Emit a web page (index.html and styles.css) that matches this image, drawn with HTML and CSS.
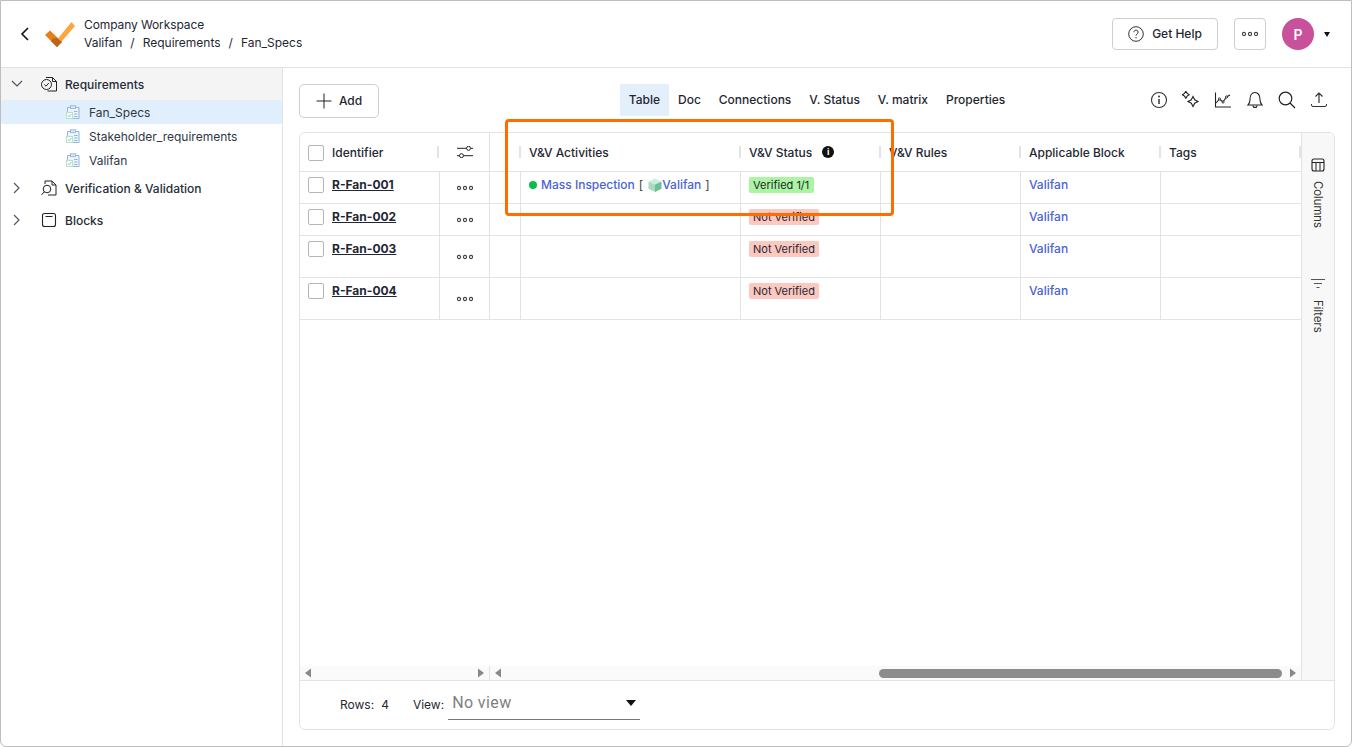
FILE: index.html
```
<!DOCTYPE html>
<html lang="en">
<head>
<meta charset="utf-8">
<title>Fan_Specs</title>
<link rel="stylesheet" href="styles.css">
</head>
<body>
<svg class="defs" width="0" height="0" aria-hidden="true">
  <symbol id="clip" viewBox="0 0 14 14">
    <path d="M1.500 2.500h11.500v11H1.500z" fill="#eef4fb" stroke="#92b6dd" stroke-width="1"/>
    <rect x="4.500" y="0.800" width="5" height="2.600" fill="#dfeaf6" stroke="#92b6dd" stroke-width="0.900"/>
    <path d="M8 6.500h3.500M8 9h3.500M8 11.500h3.500" stroke="#92b6dd" stroke-width="1"/>
    <rect x="0.500" y="7.500" width="6" height="6" fill="#f8fcfa" stroke="#b9e0c9" stroke-width="1"/>
    <path d="M2 10.500l1.200 1.200 2-2.400" fill="none" stroke="#5fc08a" stroke-width="0.800"/>
  </symbol>
  <symbol id="dots" viewBox="0 0 16 6">
    <circle cx="2" cy="3" r="1.600" fill="none" stroke="#444" stroke-width="1.100"/>
    <circle cx="8" cy="3" r="1.600" fill="none" stroke="#444" stroke-width="1.100"/>
    <circle cx="14" cy="3" r="1.600" fill="none" stroke="#444" stroke-width="1.100"/>
  </symbol>
  <symbol id="left" viewBox="0 0 8 10"><path d="M7 0.500v9L1 5z" fill="#888"/></symbol>
  <symbol id="right" viewBox="0 0 8 10"><path d="M1 0.500v9L7 5z" fill="#888"/></symbol>
</svg>
<div class="window">
  <header class="topbar">
    <div class="crumbs-side">
      <svg class="back" width="10" height="14" viewBox="0 0 10 14"><path d="M8 1L2 7l6 6" fill="none" stroke="#111" stroke-width="1.600"/></svg>
      <svg class="logo" width="30" height="25" viewBox="0 0 30 25">
        <path d="M0 13l5-4.400L17 20l-5 5z" fill="#e57f1c"/>
        <path d="M26.500 0L30 4 12 25l-6-6 5 0z" fill="#fba63f"/>
        <path d="M8 16.500l4-.5 5 4-5 5-6-6z" fill="#b9651f"/>
      </svg>
      <div class="crumbs">
        <div class="workspace">Company Workspace</div>
        <div class="trail"><span>Valifan</span><span class="slash">/</span><span>Requirements</span><span class="slash">/</span><span>Fan_Specs</span></div>
      </div>
    </div>
    <div class="actions">
      <button class="btn help">
        <svg width="16" height="16" viewBox="0 0 16 16"><circle cx="8" cy="8" r="7.300" fill="none" stroke="#333" stroke-width="1"/><path d="M5.900 6.200a2.100 2.100 0 1 1 3.300 1.700c-.8.500-1.200 1-1.200 1.800" fill="none" stroke="#333" stroke-width="1"/><circle cx="8" cy="11.800" r=".7" fill="#333"/></svg>
        <span class="btn-label">Get Help</span>
      </button>
      <button class="btn more"><svg width="16" height="6"><use href="#dots"/></svg></button>
      <div class="avatar">P</div>
      <span class="caret"></span>
    </div>
  </header>
  <div class="body">
    <nav class="sidebar">
      <div class="node open">
        <svg class="chev" width="12" height="8" viewBox="0 0 12 8"><path d="M1 1l5 5 5-5" fill="none" stroke="#4a5568" stroke-width="1.200"/></svg>
        <svg class="nicon" width="16" height="16" viewBox="0 0 16 16"><path d="M5 1.500h6.500l4 4v9.500H6.500M11.500 1.500v4h4" fill="none" stroke="#222" stroke-width="1"/><circle cx="5.500" cy="8.500" r="5" fill="#f4f4f4" stroke="#222" stroke-width="1"/><path d="M3.300 8.500l1.700 1.700 2.800-3.200" fill="none" stroke="#222" stroke-width="1"/></svg>
        <span>Requirements</span>
      </div>
      <div class="leaf active"><svg width="14" height="14"><use href="#clip"/></svg><span>Fan_Specs</span></div>
      <div class="leaf"><svg width="14" height="14"><use href="#clip"/></svg><span>Stakeholder_requirements</span></div>
      <div class="leaf"><svg width="14" height="14"><use href="#clip"/></svg><span>Valifan</span></div>
      <div class="node tall">
        <svg class="chev side" width="8" height="12" viewBox="0 0 8 12"><path d="M1 1l5 5-5 5" fill="none" stroke="#4a5568" stroke-width="1.200"/></svg>
        <svg class="nicon" width="16" height="16" viewBox="0 0 16 16"><path d="M4 1h7l4 4v10H7M11 1v4h4M4 1v3" fill="none" stroke="#222" stroke-width="1"/><circle cx="6" cy="9" r="3.800" fill="#fff" stroke="#222" stroke-width="1"/><path d="M3.300 11.700L0.500 15" stroke="#222" stroke-width="1"/></svg>
        <span>Verification &amp; Validation</span>
      </div>
      <div class="node tall">
        <svg class="chev side" width="8" height="12" viewBox="0 0 8 12"><path d="M1 1l5 5-5 5" fill="none" stroke="#4a5568" stroke-width="1.200"/></svg>
        <svg class="nicon" width="16" height="16" viewBox="0 0 16 16"><rect x="1.500" y="1.500" width="13" height="13" rx="2" fill="none" stroke="#222" stroke-width="1.100"/><path d="M4.500 4.500h7" stroke="#222" stroke-width="1.100"/></svg>
        <span>Blocks</span>
      </div>
    </nav>
    <main class="main">
      <div class="toolbar">
        <div class="tool-left">
          <button class="btn add">
            <svg width="16" height="16" viewBox="0 0 16 16"><path d="M8 .5v15M.5 8h15" stroke="#222" stroke-width="1"/></svg>
            <span class="btn-label">Add</span>
          </button>
        </div>
        <div class="tabs">
          <span class="tab current">Table</span><span class="tab">Doc</span><span class="tab">Connections</span><span class="tab">V. Status</span><span class="tab">V. matrix</span><span class="tab">Properties</span>
        </div>
        <div class="tool-icons">
          <svg class="ti" viewBox="0 0 18 18"><circle cx="9" cy="9" r="7.500" fill="none" stroke="#333" stroke-width="1.100"/><path d="M9 8v5" stroke="#333" stroke-width="1.500"/><circle cx="9" cy="5.500" r="1" fill="#333"/></svg>
          <svg class="ti" viewBox="0 0 18 18"><path d="M4.500 1l1.600 2.400L8.500 5 6.100 6.600 4.500 9 2.900 6.600.5 5l2.400-1.600z" transform="translate(0 -.5) scale(.85)" fill="none" stroke="#222" stroke-width="1.300"/><path d="M11 5.500l1.700 3.300L16 10.500l-3.300 1.700L11 15.500l-1.700-3.300L6 10.500l3.300-1.700z" fill="none" stroke="#222" stroke-width="1.100"/></svg>
          <svg class="ti" viewBox="0 0 18 18"><path d="M1.500 1.500v14.500h15.500" fill="none" stroke="#222" stroke-width="1.100"/><path d="M2 12l3.500-4 3.500 3 3.500-5 3.500-2" fill="none" stroke="#222" stroke-width="1.100"/><circle cx="5.500" cy="8" r="1.100" fill="#fff" stroke="#222" stroke-width=".9"/><circle cx="9" cy="11" r="1.100" fill="#fff" stroke="#222" stroke-width=".9"/><circle cx="12.500" cy="6" r="1.100" fill="#fff" stroke="#222" stroke-width=".9"/></svg>
          <svg class="ti" viewBox="0 0 18 18"><path d="M2 14c1.500-1.500 2-2.500 2-5.500C4 4 6 1.500 9 1.500s5 2.500 5 7c0 3 .5 4 2 5.500z" fill="none" stroke="#222" stroke-width="1.100"/><path d="M7 14.500a2 2 0 0 0 4 0" fill="none" stroke="#222" stroke-width="1.100"/></svg>
          <svg class="ti" viewBox="0 0 18 18"><circle cx="7.500" cy="7.500" r="6.300" fill="none" stroke="#222" stroke-width="1.200"/><path d="M12 12l5 5" stroke="#222" stroke-width="1.200"/></svg>
          <svg class="ti" viewBox="0 0 18 18"><path d="M9 12V2M5.500 5.500L9 2l3.500 3.500" fill="none" stroke="#333" stroke-width="1.200"/><path d="M1.500 13v1a1.500 1.500 0 0 0 1.500 1.500h12a1.500 1.500 0 0 0 1.500-1.500v-1" fill="none" stroke="#333" stroke-width="1"/></svg>
        </div>
      </div>
      <section class="panel">
        <div class="panel-top">
          <div class="table-wrap">
            <div class="table">
              <div class="tr head">
                <div class="th c-id"><span class="check"></span><span class="th-label">Identifier</span></div>
                <div class="th c-cfg"><svg width="16" height="12" viewBox="0 0 16 12"><path d="M0 2.300h9.500M13.500 2.300H16M0 9.700h2.500M6.500 9.700H16" stroke="#222" stroke-width="1"/><circle cx="11.500" cy="2.300" r="2" fill="none" stroke="#222" stroke-width="1"/><circle cx="4.500" cy="9.700" r="2" fill="none" stroke="#222" stroke-width="1"/></svg></div>
                <div class="th c-mid"></div>
                <div class="th"><span class="th-label">V&amp;V Activities</span></div>
                <div class="th"><span class="th-label">V&amp;V Status</span><span class="info">i</span></div>
                <div class="th"><span class="th-label">V&amp;V Rules</span></div>
                <div class="th"><span class="th-label">Applicable Block</span></div>
                <div class="th"><span class="th-label">Tags</span></div>
              </div>
              <div class="tr">
                <div class="td c-id"><span class="check"></span><a class="rid">R-Fan-001</a></div>
                <div class="td c-cfg"><svg width="16" height="6"><use href="#dots"/></svg></div>
                <div class="td"></div>
                <div class="td activity"><i class="dot"></i><a class="link">Mass Inspection</a><span class="br">[</span>
                  <svg class="cube" width="16" height="16" viewBox="0 0 16 16"><path d="M8 1.500l6.500 3L8 7.500 1.500 4.500z" fill="#cdeedd"/><path d="M1.500 4.500l6.500 3V15l-6.500-3.200z" fill="#a5dcc0"/><path d="M14.500 4.500l-6.500 3V15l6.500-3.200z" fill="#6fbf95"/></svg><a class="link">Valifan</a><span class="br end">]</span></div>
                <div class="td"><span class="badge ok">Verified 1/1</span></div>
                <div class="td"></div>
                <div class="td"><a class="link">Valifan</a></div>
                <div class="td"></div>
              </div>
              <div class="tr">
                <div class="td c-id"><span class="check"></span><a class="rid">R-Fan-002</a></div>
                <div class="td c-cfg"><svg width="16" height="6"><use href="#dots"/></svg></div>
                <div class="td"></div>
                <div class="td"></div>
                <div class="td"><span class="badge bad">Not Verified</span></div>
                <div class="td"></div>
                <div class="td"><a class="link">Valifan</a></div>
                <div class="td"></div>
              </div>
              <div class="tr high">
                <div class="td c-id"><span class="check"></span><a class="rid">R-Fan-003</a></div>
                <div class="td c-cfg"><svg width="16" height="6"><use href="#dots"/></svg></div>
                <div class="td"></div>
                <div class="td"></div>
                <div class="td"><span class="badge bad">Not Verified</span></div>
                <div class="td"></div>
                <div class="td"><a class="link">Valifan</a></div>
                <div class="td"></div>
              </div>
              <div class="tr high">
                <div class="td c-id"><span class="check"></span><a class="rid">R-Fan-004</a></div>
                <div class="td c-cfg"><svg width="16" height="6"><use href="#dots"/></svg></div>
                <div class="td"></div>
                <div class="td"></div>
                <div class="td"><span class="badge bad">Not Verified</span></div>
                <div class="td"></div>
                <div class="td"><a class="link">Valifan</a></div>
                <div class="td"></div>
              </div>
            </div>
            <div class="scrollbars">
              <div class="sb-left">
                <svg width="8" height="10"><use href="#left"/></svg>
                <svg width="8" height="10"><use href="#right"/></svg>
              </div>
              <div class="sb-right">
                <svg width="8" height="10"><use href="#left"/></svg>
                <div class="track"><div class="thumb"></div></div>
                <svg width="8" height="10"><use href="#right"/></svg>
              </div>
            </div>
          </div>
          <aside class="rail">
            <div class="rail-item">
              <svg width="14" height="14" viewBox="0 0 14 14"><rect x="1" y="1" width="12" height="12" rx="2" fill="none" stroke="#222" stroke-width="1.100"/><path d="M1 4.500h12M5 4.500V13M9 4.500V13" stroke="#222" stroke-width="1"/></svg>
              <span>Columns</span>
            </div>
            <div class="rail-item filters">
              <svg width="14" height="12" viewBox="0 0 14 12"><path d="M0 1.500h14M3 5.500h8M5.500 9.500h3" stroke="#555" stroke-width="1"/></svg>
              <span>Filters</span>
            </div>
          </aside>
        </div>
        <footer class="panel-foot">
          <span class="rows">Rows:</span><span class="rows-n">4</span>
          <span class="view">View:</span>
          <div class="select"><span>No view</span><i class="select-arrow"></i></div>
        </footer>
      </section>
    </main>
  </div>
  <div class="callout"></div>
</div>
</body>
</html>
```
FILE: styles.css
```
* { box-sizing: border-box; }
html, body { margin: 0; padding: 0; height: 100%; }
body { font-family: Inter, "Liberation Sans", sans-serif; font-size: 12px; color: #1f2733; background: #fff; overflow: hidden; }
.defs { position: absolute; }
button { font: inherit; color: inherit; background: #fff; }

.window { position: relative; height: 747px; border: 1px solid #bdbdbd; border-radius: 0 0 6px 6px; display: flex; flex-direction: column; overflow: hidden; }

.topbar { height: 67px; flex: none; border-bottom: 1px solid #e2e2e2; display: flex; justify-content: space-between; align-items: center; padding: 0 21px 0 19px; }
.crumbs-side { display: flex; align-items: center; }
.back { margin-right: 15px; }
.logo { margin-right: 9px; }
.crumbs { line-height: 18px; }
.workspace { letter-spacing: -.1px; }
.trail { display: flex; }
.slash { margin: 0 8px; }

.actions { display: flex; align-items: center; }
.btn { border: 1px solid #cfcfcf; border-radius: 4px; display: flex; align-items: center; justify-content: center; padding: 0; }
.btn-label { margin-top: -2px; }
.help { width: 106px; height: 32px; gap: 8px; font-weight: 500; }
.more { width: 32px; height: 32px; margin-left: 16px; }
.avatar { width: 32px; height: 32px; margin-left: 16px; border-radius: 50%; background: #c9509b; color: #fff; font-size: 14px; font-weight: 600; display: flex; align-items: center; justify-content: center; }
.caret { margin-left: 10px; border-top: 5px solid #111; border-left: 3.500px solid transparent; border-right: 3.500px solid transparent; }

.body { flex: 1; display: flex; min-height: 0; }
.sidebar { width: 282px; flex: none; border-right: 1px solid #e2e2e2; }
.node { display: flex; align-items: center; height: 32px; padding-left: 10px; font-weight: 500; color: #252d39; }
.node > span { padding-top: 1px; }
.node.open { background: #f4f4f4; }
.chev { width: 12px; flex: none; margin-right: 18px; }
.chev.side { margin-left: 2px; width: 8px; margin-right: 20px; }
.nicon { flex: none; margin-right: 8px; }
.leaf { display: flex; align-items: center; height: 24px; padding-left: 65px; gap: 9px; color: #2f3744; }
.leaf > span { padding-top: 1px; }
.leaf.active { background: #e0effb; border-radius: 2px; }

.main { flex: 1; min-width: 0; padding: 16px; display: flex; flex-direction: column; }
.toolbar { height: 34px; margin-bottom: 14px; flex: none; display: grid; grid-template-columns: 1fr auto 1fr; }
.add { width: 80px; height: 34px; gap: 7px; font-weight: 500; border-radius: 5px; }
.tabs { display: flex; height: 32px; align-items: center; font-weight: 500; }
.tab { padding: 0 9px; height: 32px; line-height: 32px; white-space: nowrap; }
.tab.current { background: #e3f0fb; }
.tool-icons { display: flex; justify-content: flex-end; align-items: center; height: 32px; gap: 14px; padding-right: 7px; }
.ti { width: 18px; height: 18px; display: block; }

.panel { flex: 1; min-height: 0; border: 1px solid #e3e3e3; border-radius: 6px; display: flex; flex-direction: column; overflow: hidden; }
.panel-top { flex: 1; min-height: 0; display: flex; border-bottom: 1px solid #e3e3e3; }
.table-wrap { width: 1001px; flex: none; display: flex; flex-direction: column; }
.table { flex: 1; min-height: 0; }
.tr { display: grid; grid-template-columns: 140px 50px 31px 220px 140px 140px 140px 140px; height: 32px; border-bottom: 1px solid #e3e3e3; }
.tr.head { height: 39px; }
.tr.high { height: 42px; }
.th { display: flex; align-items: center; padding: 1px 0 0 8px; font-weight: 500; position: relative; }
.th::after { content: ""; position: absolute; right: 0; top: 13px; width: 2px; height: 12px; background: #e3e3e3; }
.th.c-id::after { right: 1px; }
.th.c-cfg { justify-content: center; border-right: 1px solid #e3e3e3; padding: 0; }
.th.c-cfg::after { display: none; }
.th-label { white-space: nowrap; }
.info { margin-left: 10px; width: 12px; height: 12px; border-radius: 50%; background: #111; color: #fff; font-size: 9px; font-weight: 700; line-height: 12px; text-align: center; position: relative; top: -1px; }
.td { border-right: 1px solid #e3e3e3; padding: 5px 8px 0; line-height: 16px; white-space: nowrap; min-width: 0; }
.td:last-child { border-right: 0; }
.td.c-id { display: flex; align-items: flex-start; }
.td.c-cfg { display: flex; align-items: center; justify-content: center; padding: 0; }
.check { width: 16px; height: 16px; border: 1px solid #b5b5b5; border-radius: 2px; flex: none; margin-right: 8px; background: #fff; }
.rid { font-weight: 700; color: #1f2733; text-decoration: underline; line-height: 15px; }
.link { color: #4a63d8; font-weight: 500; }
.activity { display: flex; align-items: flex-start; }
.dot { width: 8px; height: 8px; border-radius: 50%; background: #0dbb4f; margin: 4px 4px 0 0; flex: none; }
.br { margin-left: 4px; color: #444; }
.br.end { margin-left: 4px; }
.cube { margin: 0 -1px 0 4px; flex: none; }
.badge { display: inline-block; height: 16px; line-height: 16px; padding: 0 4px; border-radius: 2px; font-size: 11px; }
.badge.ok { background: #abf5a2; padding-right: 5px; }
.badge.bad { background: #fcc9c1; }

.scrollbars { height: 14px; flex: none; display: flex; background: #fafafa; }
.sb-left { width: 190px; display: flex; align-items: center; justify-content: space-between; padding: 0 4px; border-right: 1px solid #e3e3e3; }
.sb-right { flex: 1; display: flex; align-items: center; padding: 0 4px; }
.track { flex: 1; padding: 0 7px 0 377px; }
.thumb { height: 9px; border-radius: 5px; background: #8c8c8c; }

.rail { flex: 1; background: #f8f8f8; border-left: 1px solid #e3e3e3; display: flex; flex-direction: column; align-items: center; padding-top: 25px; }
.rail-item { display: flex; flex-direction: column; align-items: center; gap: 9px; font-size: 11.300px; color: #333; }
.rail-item span { writing-mode: vertical-rl; }
.rail-item.filters { margin-top: 50px; gap: 10px; }

.panel-foot { height: 48px; flex: none; display: flex; align-items: center; padding: 0 0 2px 40px; }
.rows-n { margin-left: 7px; }
.view { margin-left: 24px; }
.select { margin-left: 4px; width: 192px; height: 32px; border-bottom: 1px solid #777; display: flex; justify-content: space-between; align-items: center; padding: 0 4px 2px; font-family: Roboto, sans-serif; font-size: 16px; color: #808080; letter-spacing: .4px; }
.select-arrow { border-top: 6px solid #111; border-left: 5.500px solid transparent; border-right: 5.500px solid transparent; }

.callout { position: absolute; left: 504px; top: 118px; width: 389px; height: 97px; border: 3px solid #ff6d00; border-radius: 4px; pointer-events: none; }
```
